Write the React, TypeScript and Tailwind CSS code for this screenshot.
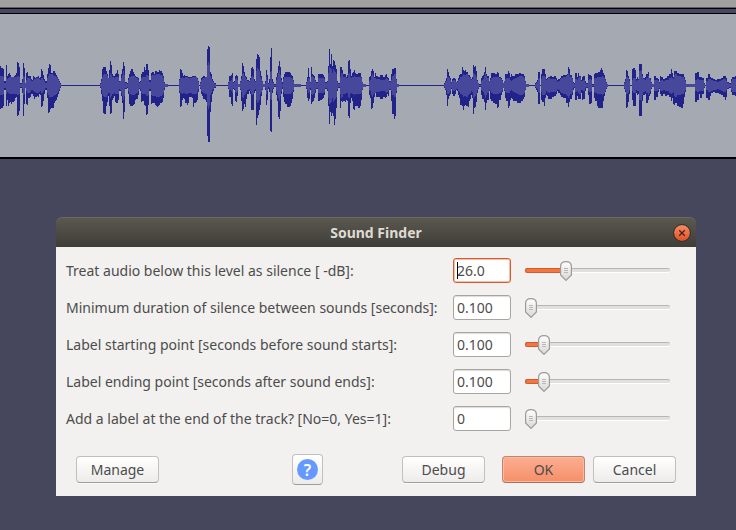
import { useState } from "react";

// Each sample column: x, peak above the axis, peak below the axis, RMS half height.
// A column holds its values until the next one starts.
const WAVE = `
0 19 23 9,1 17 22 9,3 16 20 8,4 4 4 2,6 20 20 8,7 9 14 6,8 11 20 7,9 12 17 8,10 10 16 8,11 8 18 8,12 8 16 8,14 9 15 8,15 10 12 8,16 12 11 8,17 23 30 9,18 22 29 9,19 18 25 8,20 2 2 1,22 6 7 3,23 22 30 9,24 17 18 8,25 2 2 2,26 12 18 5,27 13 19 7,28 9 12 7,30 9 11 6,31 6 8 4,32 5 8 4,33 9 10 5,34 8 13 6,35 7 11 6,36 8 11 7,37 8 10 7,38 9 11 7,39 7 8 6,40 8 9 5,41 16 21 7,42 14 20 7,43 10 15 5,44 6 8 4,45 4 4 2,46 4 4 2,47 11 12 7,48 17 27 9,49 21 26 11,50 20 23 11,51 12 22 11,53 14 22 10,54 14 17 9,55 12 15 9,56 10 14 8,57 8 11 7,58 6 8 5,59 4 5 3,60 2 2 1,61 0 0 0,
100 2 2 1,101 6 8 4,102 16 15 8,103 18 27 10,104 18 28 11,106 14 20 11,107 11 16 9,108 7 10 7,109 15 20 7,110 24 28 12,111 20 27 10,112 11 14 8,113 9 12 8,114 9 10 7,115 11 16 8,116 12 17 8,117 15 17 8,118 11 14 8,119 4 5 3,120 4 5 4,121 11 10 7,122 16 17 10,123 23 33 14,124 19 26 10,125 3 3 2,127 2 2 1,128 7 8 5,129 11 18 8,130 14 20 8,131 16 20 9,132 16 20 9,133 13 19 9,134 11 18 9,135 9 14 8,136 8 13 7,138 7 9 5,139 3 3 2,140 4 5 3,141 11 16 7,142 13 15 8,144 18 19 8,145 15 20 8,146 21 29 10,147 21 28 10,148 15 19 9,149 5 5 3,150 5 5 3,151 12 18 9,152 13 17 10,154 11 17 10,155 14 19 10,156 14 20 11,157 13 21 11,158 13 20 11,159 15 19 11,160 14 17 10,162 12 16 9,163 9 12 7,164 3 4 2,165 1 1 1,168 0 0 0,
179 6 7 5,180 16 21 7,181 15 20 7,182 12 14 8,183 9 12 7,184 10 13 7,185 9 17 8,187 9 19 8,188 8 17 7,189 8 11 7,192 9 12 8,193 9 21 8,194 9 17 8,196 8 16 8,197 7 14 6,198 4 6 3,199 0 0 0,200 3 3 2,201 7 8 5,202 8 10 6,203 9 13 7,205 8 14 8,206 8 16 8,207 36 50 20,208 39 56 23,209 38 56 20,210 13 26 9,211 11 16 7,212 6 8 4,213 4 5 3,214 2 2 1,216 0 0 0,
228 3 3 2,229 9 11 4,231 10 18 5,232 12 20 7,233 3 3 2,234 4 4 3,235 9 15 6,236 10 16 7,237 9 10 5,238 1 1 1,240 4 4 3,241 9 15 6,242 22 25 11,243 19 23 12,244 13 18 9,245 9 21 8,246 8 13 6,247 5 8 4,249 4 5 3,250 7 8 5,251 17 24 8,252 18 24 9,253 16 24 8,254 6 7 4,255 4 5 3,256 26 39 14,257 31 32 17,258 30 29 16,259 28 24 14,260 14 19 8,261 9 10 6,262 4 4 3,263 1 1 1,265 4 4 2,266 15 19 8,267 10 14 5,268 2 3 1,269 6 6 2,270 28 45 13,271 37 46 14,272 6 7 3,273 3 3 2,274 1 1 0,276 8 9 5,277 12 15 8,278 19 31 12,279 24 33 15,280 18 25 10,281 7 8 5,282 3 3 1,283 8 11 6,284 11 16 8,285 13 18 8,287 13 21 8,290 12 20 8,291 10 17 7,292 9 13 6,293 5 6 4,294 1 1 1,301 0 0 0,
306 3 3 2,307 8 12 4,308 17 15 7,309 8 13 6,310 3 4 2,311 18 18 8,312 11 16 9,313 10 15 8,314 9 12 7,315 5 7 4,316 3 3 2,318 11 15 7,320 11 14 7,322 11 13 7,323 10 12 7,324 8 9 6,325 3 3 2,327 4 5 3,328 19 20 12,329 36 38 18,330 21 26 17,331 31 30 16,332 19 27 12,333 25 30 16,334 24 39 14,335 20 33 13,336 16 22 11,337 4 5 3,338 2 2 1,340 18 22 8,341 18 15 12,342 15 16 11,343 11 15 8,345 11 16 8,346 8 14 7,347 10 15 7,348 24 30 11,349 25 32 12,350 16 17 8,351 9 12 7,352 12 15 8,353 13 23 8,354 15 24 9,355 12 20 8,356 11 20 8,358 12 22 8,360 12 20 8,361 8 14 7,362 3 4 3,363 1 1 1,366 0 0 0,
369 8 9 4,370 9 12 5,371 14 23 9,372 16 22 11,373 14 17 9,374 8 11 7,375 12 7 7,376 9 11 6,378 8 11 6,380 10 13 5,383 8 11 5,385 10 12 6,386 11 11 7,387 8 8 6,388 7 10 5,389 4 4 3,391 11 15 5,392 16 28 9,394 17 33 11,395 17 30 11,396 6 7 5,397 1 1 1,399 0 0 0,
444 2 2 1,445 4 4 3,446 7 9 4,447 16 20 8,448 13 13 8,449 9 10 7,450 7 8 5,451 3 3 2,452 6 8 4,453 7 10 5,455 6 8 4,456 3 4 3,457 4 5 3,458 7 9 5,459 10 12 6,460 11 19 8,462 18 20 9,463 15 24 11,464 14 20 10,465 15 19 10,466 13 20 11,468 10 21 9,469 10 15 8,470 8 13 7,471 6 9 5,472 8 12 6,473 20 28 12,474 18 22 11,475 19 21 10,476 14 16 8,477 5 7 4,478 2 3 2,479 1 1 0,
481 7 9 4,482 9 13 5,483 10 13 6,484 13 16 9,485 18 24 12,486 11 17 9,487 9 14 7,489 4 5 4,490 7 13 5,491 12 15 7,493 12 17 8,495 11 18 8,497 13 22 8,498 12 21 8,499 8 14 7,501 7 9 6,502 5 6 4,503 2 2 2,504 4 5 4,505 11 12 6,506 11 15 7,508 14 22 7,509 12 20 7,510 8 14 5,511 11 12 4,512 9 13 5,513 9 15 6,515 11 15 7,517 11 17 8,519 12 17 9,521 11 15 9,523 11 13 8,524 9 11 7,525 4 4 3,526 1 1 1,529 0 0 0,
535 2 2 1,536 3 4 2,537 5 6 3,538 13 18 6,539 13 18 7,540 0 0 0,541 11 14 6,542 16 16 9,544 16 20 9,545 11 12 8,546 6 9 5,547 7 10 6,548 8 13 7,550 9 13 6,552 8 11 6,554 9 10 6,556 7 8 5,557 5 5 3,558 6 7 4,560 7 9 6,561 9 11 7,563 10 12 8,566 10 17 9,567 11 17 10,568 18 21 12,569 16 16 10,570 10 13 8,572 7 9 6,573 3 4 2,574 2 2 1,575 12 14 6,577 8 10 5,578 12 13 7,579 9 13 8,581 5 7 4,582 8 14 4,583 9 13 5,585 4 5 2,586 2 2 1,588 11 9 5,589 10 18 6,591 9 17 5,592 1 1 0,594 11 12 6,595 12 15 7,597 12 20 8,598 13 22 8,600 15 22 8,601 17 22 8,602 15 22 9,603 12 15 8,604 10 10 7,605 6 6 5,606 3 3 2,607 1 1 1,608 0 0 0,
624 3 3 2,625 6 6 4,626 15 22 8,627 14 21 8,628 9 16 7,629 6 8 4,630 0 0 0,632 16 14 5,633 17 20 7,635 15 20 7,636 6 7 4,637 8 9 5,638 6 8 5,639 21 30 14,641 21 30 15,642 11 15 9,643 7 9 6,645 8 8 5,646 11 17 7,648 13 14 9,649 7 10 7,650 7 8 5,651 3 3 2,652 1 1 1,654 9 14 5,656 7 11 5,658 6 6 4,659 3 3 2,660 9 8 4,661 8 10 5,663 6 8 4,665 7 10 5,667 9 9 5,669 11 11 7,671 16 15 8,672 12 12 7,673 8 18 6,674 14 19 10,675 14 17 11,677 12 20 9,679 11 21 9,681 11 22 8,683 11 18 8,684 8 11 6,685 5 6 4,686 1 1 1,
695 12 16 5,697 13 14 6,699 8 8 5,700 8 12 5,702 7 8 5,704 2 2 1,705 0 0 0,706 7 12 4,708 11 14 6,710 8 10 6,711 7 7 5,713 6 6 4,715 5 7 4,717 6 7 3,719 6 8 4,721 7 9 5,723 9 11 6,725 9 14 6,726 7 11 4,727 3 3 2,729 2 2 1,731 6 6 4,732 8 9 6,735 9 10 6,736 0 0 0`
  .split(",")
  .map((column) => column.trim().split(" ").map(Number));

const AXIS = 71;

function Waveform() {
  return (
    <svg
      role="img"
      aria-label="Audio track waveform"
      viewBox="0 0 736 143"
      preserveAspectRatio="none"
      shapeRendering="crispEdges"
      className="block h-[143px] w-full"
    >
      <rect x="0" y={AXIS} width="736" height="1" fill="#22228b" />
      {WAVE.slice(0, -1).map(([x, up, down, rms], i) => {
        const width = WAVE[i + 1][0] - x;
        return up === 0 ? null : (
          <g key={x}>
            <rect x={x} y={AXIS - up} width={width} height={up + down + 1} fill="#22228b" />
            <rect x={x} y={AXIS - rms} width={width} height={rms * 2 + 1} fill="#47479c" />
          </g>
        );
      })}
    </svg>
  );
}

type Control = { id: string; label: string; text: string; position: number };

const CONTROLS: Control[] = [
  { id: "level", label: "Treat audio below this level as silence [ -dB]:", text: "26.0", position: 26 },
  { id: "silence", label: "Minimum duration of silence between sounds [seconds]:", text: "0.100", position: 0 },
  { id: "start", label: "Label starting point [seconds before sound starts]:", text: "0.100", position: 10 },
  { id: "end", label: "Label ending point [seconds after sound ends]:", text: "0.100", position: 10 },
  { id: "final", label: "Add a label at the end of the track? [No=0, Yes=1]:", text: "0", position: 0 },
];

function Slider({ label, initial }: { label: string; initial: number }) {
  const [value, setValue] = useState(initial);
  const left = `calc((100% - 12px) * ${value / 100})`;
  return (
    <div className="relative flex h-[25px] items-center">
      <div className="h-[5px] w-full rounded-[2px] border-t border-b border-t-[#b8b6b3] border-b-white bg-[#e2e0de]" />
      {value > 0 && (
        <div
          className="absolute left-0 h-[5px] rounded-l-full border border-r-0 border-[#d25a2c] bg-[#f2763f]"
          style={{ width: `calc(${left} + 4px)` }}
        />
      )}
      <svg aria-hidden="true" className="absolute h-5 w-3" viewBox="0 0 12 20" style={{ left }}>
        <defs>
          <linearGradient id="thumb" x1="0" y1="0" x2="0" y2="1">
            <stop offset="0" stopColor="#ffffff" />
            <stop offset="1" stopColor="#d8d7d5" />
          </linearGradient>
        </defs>
        <path
          d="M.6 5.5C.6 2.5 2.8.6 6 .6s5.400 1.900 5.400 4.900v8.500L6 19.400.6 14z"
          fill="url(#thumb)"
          stroke="#9d9b97"
          strokeWidth="1.200"
        />
        <path d="M4 7.500h4M4 9.500h4M4 11.500h4" stroke="#b9b8b5" strokeWidth="1" />
      </svg>
      <input
        type="range"
        min="0"
        max="100"
        value={value}
        aria-label={label}
        onChange={(e) => setValue(Number(e.target.value))}
        className="absolute inset-0 h-full w-full cursor-pointer opacity-0"
      />
    </div>
  );
}

function ControlRow({ control }: { control: Control }) {
  const focused = control.id === "level";
  return (
    <div className="grid grid-cols-[1fr_58px_145px] items-center gap-x-[14px]">
      <label htmlFor={control.id} className="whitespace-nowrap leading-[25px]">
        {control.label}
      </label>
      <div className="relative">
        <input
          id={control.id}
          type="text"
          defaultValue={control.text}
          className={
            focused
              ? "block h-[25px] w-full rounded-[3px] border border-[#d65a2e] bg-white px-[3px] shadow-[inset_0_0_0_1px_#f3c0ab] outline-none"
              : "block h-[25px] w-full rounded-[3px] border border-[#a9a6a1] bg-white px-[3px] shadow-[inset_0_1px_1px_#dddcda] outline-none"
          }
        />
        {focused && <span className="absolute left-1 top-1 h-[17px] w-px bg-black" />}
      </div>
      <Slider label={control.label} initial={control.position} />
    </div>
  );
}

const BUTTON =
  "h-[27px] w-[83px] rounded-[4px] border border-[#c3c0bc] border-b-[#9f9d99] bg-linear-to-b from-white to-[#edecea] shadow-[0_1px_0_#fafaf9]";
const PRIMARY =
  "h-[27px] w-[83px] rounded-[4px] border border-[#bd8672] border-b-[#a8705c] bg-linear-to-b from-[#fcae90] to-[#f58f69] shadow-[inset_0_0_0_1px_#fdb99f]";

export default function App() {
  return (
    <div className="flex min-h-screen flex-col bg-[#46475c] font-['Noto_Sans','Open_Sans',sans-serif] text-sm text-[#4c4c4c]">
      <div className="h-2 border-b border-[#5e5e5e] bg-[#a0a0a0]" />
      <div className="h-1.5 border-y border-black bg-[#474860]" />
      <div className="border-b-2 border-black bg-[#a5a9b2]">
        <Waveform />
      </div>
      <section role="dialog" aria-labelledby="title" className="mb-8 ml-14 mr-10 mt-[58px]">
        <header className="grid h-[30px] grid-cols-[1fr_auto_1fr] items-center rounded-t-md border-t border-[#6b685f] bg-linear-to-b from-[#5b584f] to-[#3e3d38] px-[6px]">
          <h1 id="title" className="col-start-2 font-bold text-[#dfdbd2]">
            Sound Finder
          </h1>
          <button
            type="button"
            aria-label="Close"
            className="flex size-4 items-center justify-center justify-self-end rounded-full bg-linear-to-b from-[#f68a63] to-[#e2511f] outline outline-[#33322d]"
          >
            <svg aria-hidden="true" className="size-2" viewBox="0 0 8 8">
              <path d="M1.200 1.200l5.600 5.600M6.800 1.200L1.200 6.800" stroke="#45251a" strokeWidth="1.300" />
            </svg>
          </button>
        </header>
        <form className="bg-[#f2f1ef] pb-[11px] pt-[11px]" onSubmit={(e) => e.preventDefault()}>
          <div className="flex flex-col gap-3 pl-[10px] pr-[26px]">
            {CONTROLS.map((control) => (
              <ControlRow key={control.id} control={control} />
            ))}
          </div>
          <div className="mt-[23px] flex items-center px-5">
            <button type="button" className={BUTTON}>
              Manage
            </button>
            <button
              type="button"
              aria-label="Help"
              className="ml-auto mr-[79px] flex size-[31px] items-center justify-center rounded-[4px] border border-[#c3c0bc] border-b-[#9f9d99] bg-linear-to-b from-white to-[#edecea]"
            >
              <span className="flex size-[21px] items-center justify-center rounded-full bg-[#6699ff] text-base font-semibold leading-none text-white">
                ?
              </span>
            </button>
            <button type="button" className={BUTTON}>
              Debug
            </button>
            <div className="ml-[17px] flex gap-2">
              <button type="submit" className={PRIMARY}>
                OK
              </button>
              <button type="button" className={BUTTON}>
                Cancel
              </button>
            </div>
          </div>
        </form>
      </section>
    </div>
  );
}
